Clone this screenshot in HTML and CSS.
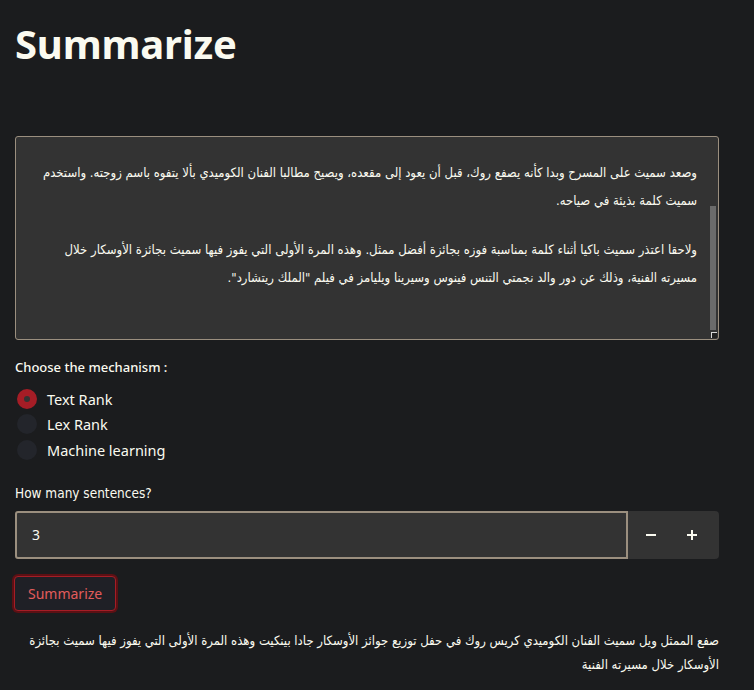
FILE: index.html
```html
<!DOCTYPE html>
<html lang="en">
<head>
<meta charset="utf-8">
<link rel="stylesheet" href="styles.css">
</head>
<body>
<main class="app">
  <h1 class="title">Summarize</h1>

  <div class="textarea">
    <div class="textarea-text" dir="rtl">
      <p>وصعد سميث على المسرح وبدا كأنه يصفع روك، قبل أن يعود إلى مقعده، ويصيح مطالبا الفنان الكوميدي بألا يتفوه باسم زوجته. واستخدم سميث كلمة بذيئة في صياحه.</p>
      <p>ولاحقا اعتذر سميث باكيا أثناء كلمة بمناسبة فوزه بجائزة أفضل ممثل. وهذه المرة الأولى التي يفوز فيها سميث بجائزة الأوسكار خلال<br>مسيرته الفنية، وذلك عن دور والد نجمتي التنس فينوس وسيرينا ويليامز في فيلم "الملك ريتشارد".</p>
    </div>
    <div class="scrollbar"></div>
    <div class="resize"></div>
  </div>

  <div class="label">Choose the mechanism :</div>
  <div class="radios">
    <label class="radio"><span class="dot dot-on"></span><span>Text Rank</span></label>
    <label class="radio"><span class="dot"></span><span>Lex Rank</span></label>
    <label class="radio"><span class="dot"></span><span>Machine learning</span></label>
  </div>

  <div class="label label-narrow">How many sentences?</div>
  <div class="number">
    <div class="number-field">3</div>
    <div class="number-btns">
      <span class="step">
        <svg width="12" height="12" viewBox="0 0 12 12"><rect x="1" y="5" width="10" height="2" fill="#fafaf0"/></svg>
      </span>
      <span class="step">
        <svg width="12" height="12" viewBox="0 0 12 12"><rect x="1" y="5" width="10" height="2" fill="#fafaf0"/><rect x="5" y="1" width="2" height="10" fill="#fafaf0"/></svg>
      </span>
    </div>
  </div>

  <div class="btn-row"><button class="btn">Summarize</button></div>

  <p class="output" dir="rtl">صفع الممثل ويل سميث الفنان الكوميدي كريس روك في حفل توزيع جوائز الأوسكار جادا بينكيت وهذه المرة الأولى التي يفوز فيها سميث بجائزة<br>الأوسكار خلال مسيرته الفنية</p>
</main>
</body>
</html>
```

FILE: styles.css
```css
html, body {
  margin: 0;
  padding: 0;
  background: #1b1c1e;
}
body {
  color: #fafaf0;
  font-family: "Noto Sans", "Open Sans", sans-serif;
}
.app {
  width: 704px;
  padding: 0 0 0 15px;
  display: flex;
  flex-direction: column;
}
.title {
  margin: 14px 0 0 0;
  font-size: 40px;
  font-weight: 700;
  line-height: 60px;
  letter-spacing: -0.2px;
}
.textarea {
  position: relative;
  margin-top: 62px;
  height: 202px;
  background: #333333;
  border: 1px solid #9b8f7f;
  border-radius: 3px;
  box-sizing: content-box;
}
.textarea-text {
  padding: 22px 21px 0 7px;
  font-family: "DejaVu Sans Condensed", "DejaVu Sans", sans-serif;
  font-size: 13px;
  line-height: 28px;
  color: #fafaf0;
}
.textarea-text p {
  margin: 0 0 21px 0;
}
.scrollbar {
  position: absolute;
  right: 2px;
  top: 69px;
  width: 6px;
  height: 124px;
  background: #6b6b6b;
}
.resize {
  position: absolute;
  right: 1px;
  bottom: 1px;
  width: 5px;
  height: 5px;
  border: 1px solid #d8d8d8;
  border-right: none;
  border-bottom: none;
  background: #222;
}
.label {
  margin-top: 18px;
  font-size: 13px;
  line-height: 18px;
  font-weight: 500;
}
.label-narrow {
  margin-top: 21px;
  font-family: "DejaVu Sans Condensed", "DejaVu Sans", sans-serif;
  font-stretch: condensed;
  font-size: 13.5px;
  font-weight: 400;
}
.radios {
  display: flex;
  flex-direction: column;
  margin-top: 10px;
}
.radio {
  display: flex;
  align-items: center;
  height: 25.5px;
  font-size: 14.5px;
  gap: 10px;
}
.dot {
  width: 20px;
  height: 20px;
  border-radius: 50%;
  background: #23252b;
  margin-left: 2px;
  box-sizing: border-box;
}
.dot-on {
  background: #333333;
  border: 7px solid #a51d26;
}
.number {
  display: flex;
  margin-top: 9px;
  height: 48px;
}
.number-field {
  flex: 1;
  background: #333333;
  border: 2px solid #9b8f7f;
  border-radius: 3px 0 0 3px;
  padding-left: 15px;
  display: flex;
  align-items: center;
  font-size: 14px;
}
.number-btns {
  width: 91px;
  background: #333333;
  border-radius: 0 4px 4px 0;
  display: flex;
  align-items: center;
  justify-content: space-around;
  padding: 0 6px 0 2px;
  box-sizing: border-box;
}
.step {
  display: flex;
  width: 24px;
  justify-content: center;
}
.btn-row {
  margin-top: 17px;
}
.btn {
  font-family: "Noto Sans", sans-serif;
  font-size: 14px;
  color: #e25c5c;
  background: #1f2026;
  border: 1px solid #a51d26;
  border-radius: 4px;
  height: 35px;
  padding: 0 13px;
  margin-left: -1px;
  box-shadow: 0 0 0 2px #5c1014;
  cursor: pointer;
}
.output {
  margin: 18px 0 0 0;
  font-family: "DejaVu Sans Condensed", "DejaVu Sans", sans-serif;
  font-size: 13px;
  line-height: 24px;
  color: #fafaf0;
}
```
